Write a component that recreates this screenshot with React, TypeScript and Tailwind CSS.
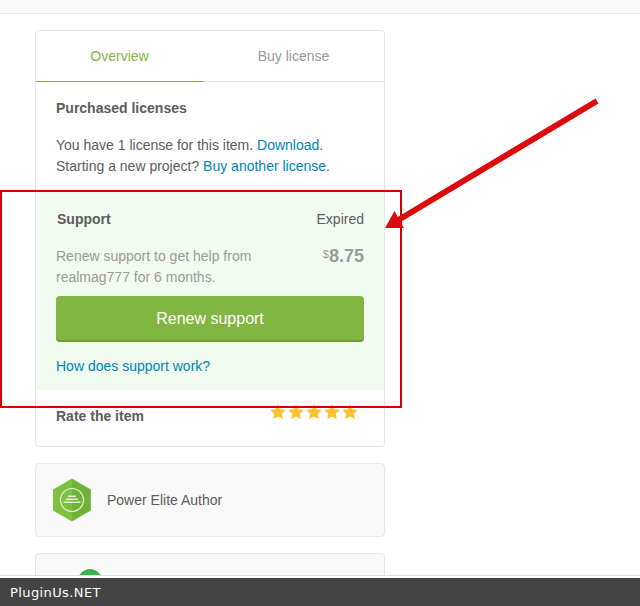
import React from "react";

function Star() {
  return (
    <svg width="16" height="15" viewBox="0 0 24 23" className="block">
      <path d="M12 0.5l3.6 7.6 8.2 1.1-6 5.8 1.5 8.2-7.3-4-7.3 4 1.5-8.2-6-5.8 8.2-1.1z" fill="#ffc02e" />
    </svg>
  );
}

function Badge() {
  return (
    <svg width="40" height="44" viewBox="0 0 40 44" className="block">
      <path d="M20 1.5 38 12v20L20 42.5 2 32V12z" fill="#7dc143" stroke="#7dc143" strokeLinejoin="round" strokeWidth="2" />
      <path d="M20 1.5 38 12v20L20 42.5z" fill="#6fb23a" />
      <circle cx="20" cy="22" r="11.5" fill="none" stroke="#e4f2d6" strokeWidth="1.2" />
      <rect x="16" y="17.5" width="8" height="1.5" fill="#e4f2d6" />
      <rect x="14" y="20.5" width="12" height="1.5" fill="#e4f2d6" />
      <rect x="11.5" y="23.5" width="17" height="1.5" fill="#e4f2d6" />
    </svg>
  );
}

export default function App() {
  return (
    <div className="relative h-[606px] w-[640px] overflow-hidden bg-white font-['Liberation_Sans',Arial,sans-serif] text-[14px] leading-[21px] text-[#5c5c5c]">
      <div className="h-[14px] border-b border-[#e3e6e8] bg-[#f9f9f9]" />

      <div className="flex w-[350px] flex-col gap-4 pt-4 ml-[35px]">
        <div className="h-[417px] rounded border border-[#e1e8ed] bg-white">
          <div className="flex h-[51px] text-[#9a9a9a]">
            <div className="flex w-[167px] items-center justify-center border-b border-[#7fa650] text-[#82b541]">Overview</div>
            <div className="flex flex-1 items-center justify-center border-b border-[#e1e8ed]">Buy license</div>
          </div>
          <div className="h-[108px] px-5 pt-4">
            <div className="font-bold">Purchased licenses</div>
            <p className="mt-4">
              You have 1 license for this item. <a className="text-[#0084b4]">Download</a>.<br />
              Starting a new project? <a className="text-[#0084b4]">Buy another license</a>.
            </p>
          </div>
          <div className="h-[200px] bg-[#f1fbef] px-5 pt-[19px]">
            <div className="flex justify-between pl-px">
              <span className="font-bold">Support</span>
              <span>Expired</span>
            </div>
            <div className="mt-4 flex justify-between">
              <p className="w-[220px] text-[#9a9a9a]">Renew support to get help from realmag777 for 6 months.</p>
              <div className="font-bold text-[#9a9a9a] text-[18px] leading-[21px]">
                <span className="relative -top-[4px] text-[11px] font-normal">$</span>8.75
              </div>
            </div>
            <button className="mt-2 block h-[46px] w-full rounded border-b-2 border-[#6f9a38] bg-[#82b541] text-[16px] text-white">Renew support</button>
            <a className="mt-[14px] block text-[#0084b4]">How does support work?</a>
          </div>
          <div className="flex justify-between pl-5 pr-[26px]">
            <span className="mt-4 font-bold">Rate the item</span>
            <div className="mt-[14px] flex h-[15px] gap-[2px]">
              <Star /><Star /><Star /><Star /><Star />
            </div>
          </div>
        </div>

        <div className="flex h-[74px] items-center gap-[15px] rounded border border-[#e1e8ed] bg-[#f9f9f9] pl-[16px]">
          <Badge />
          <span>Power Elite Author</span>
        </div>

        <div className="relative h-[60px] rounded border border-[#e1e8ed] bg-[#f9f9f9]">
          <div className="absolute left-[42px] top-[15px] h-6 w-6 rounded-full bg-[#3ab54a]" />
        </div>
      </div>

      <div className="absolute left-0 top-[190px] h-[218px] w-[402px] border-2 border-[#d40000]" />
      <svg width="640" height="606" className="pointer-events-none absolute left-0 top-0">
        <path d="M597 101 L395 222" stroke="#dc0a0a" strokeWidth="6" fill="none" />
        <path d="M385 228 L394.5 211 L404 228 z" fill="#dc0a0a" />
      </svg>

      <div className="absolute bottom-0 left-0 w-full border-t border-[#dcdcdc] bg-white pt-[2px]">
        <div className="flex h-7 items-center bg-[#444444] pl-[10px] font-['DejaVu_Sans',sans-serif] text-[13px] tracking-[0.4px] text-white">PluginUs.NET</div>
      </div>
    </div>
  );
}
